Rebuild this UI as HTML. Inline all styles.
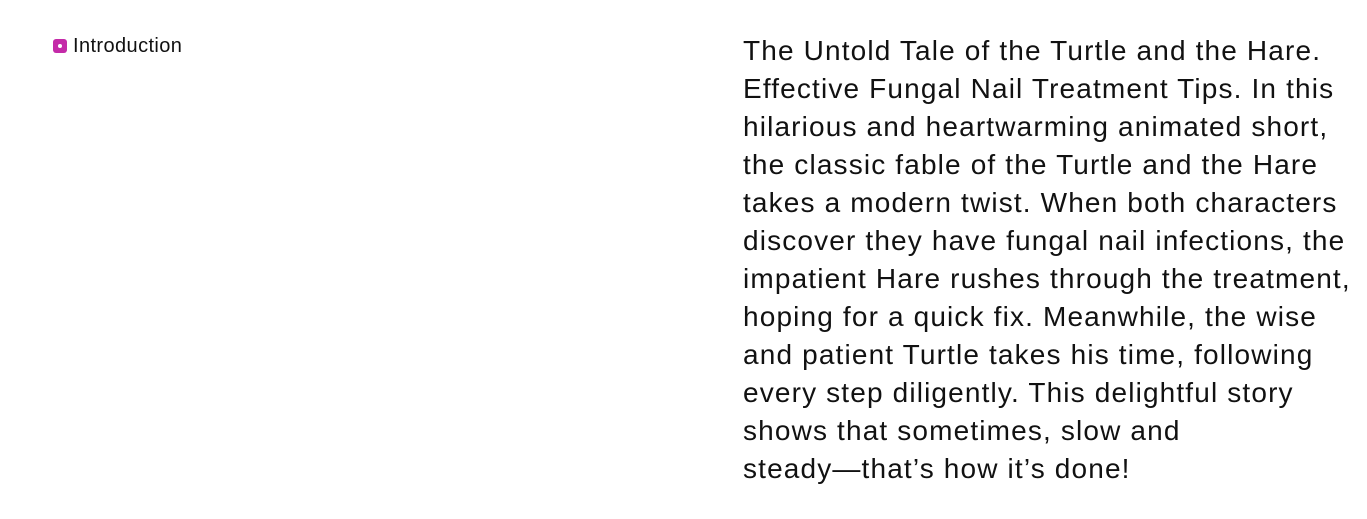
<!DOCTYPE html>
<html><head><style>
body{margin:0;width:1367px;height:519px;background:#fff;font-family:"Liberation Sans",sans-serif;color:#111;overflow:hidden;position:relative}
.tag{position:absolute;left:53px;top:35px;font-size:20px;line-height:22px;display:flex;align-items:center;letter-spacing:0.4px}
.sq{width:14px;height:14px;background:#c42aa8;border-radius:3px;margin-right:6px;position:relative}
.sq:after{content:"";position:absolute;left:5px;top:5px;width:4px;height:4px;background:#fff;border-radius:50%}
.txt{position:absolute;left:743px;top:32px;font-size:28px;line-height:38px;white-space:nowrap;letter-spacing:1.15px}
</style></head><body>
<div class="tag"><span class="sq"></span>Introduction</div>
<div class="txt">The Untold Tale of the Turtle and the Hare.<br>Effective Fungal Nail Treatment Tips. In this<br>hilarious and heartwarming animated short,<br>the classic fable of the Turtle and the Hare<br>takes a modern twist. When both characters<br>discover they have fungal nail infections, the<br>impatient Hare rushes through the treatment,<br>hoping for a quick fix. Meanwhile, the wise<br>and patient Turtle takes his time, following<br>every step diligently. This delightful story<br>shows that sometimes, slow and<br>steady—that’s how it’s done!</div>
</body></html>
